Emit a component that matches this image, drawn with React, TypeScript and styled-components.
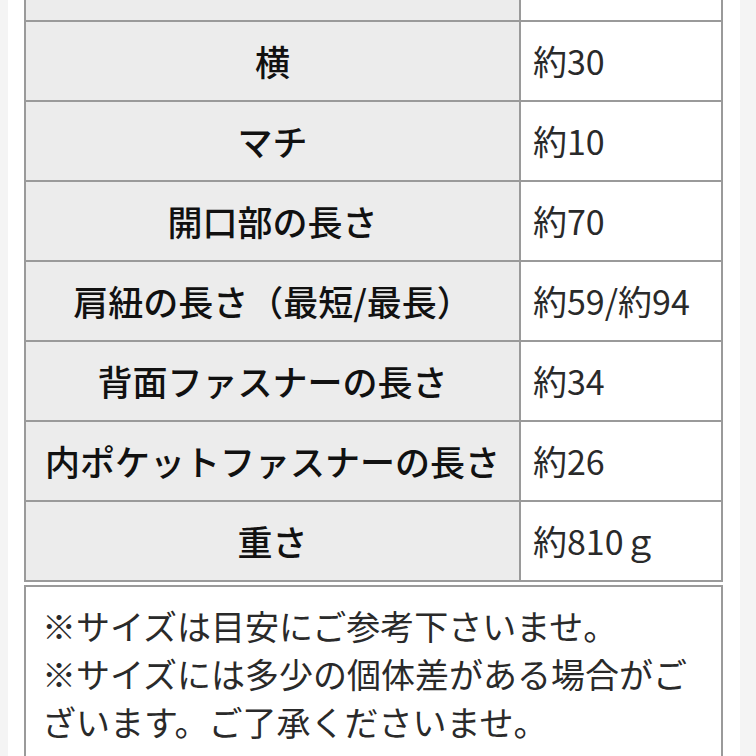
import styled, { createGlobalStyle } from 'styled-components'

const GlobalStyle = createGlobalStyle`
  html, body {
    margin: 0;
    padding: 0;
    background: #f4f4f4;
  }
  body {
    font-family: 'Noto Sans CJK JP', 'Noto Sans', sans-serif;
    color: #222;
  }
`

const Page = styled.div`
  margin-left: 8px;
  width: 732px;
  min-height: 756px;
  background: #ffffff;
  padding: 0 17px 0 16px;
  box-sizing: border-box;
  overflow: hidden;
`

const SizeTable = styled.table`
  width: 699px;
  border-collapse: collapse;
  table-layout: fixed;
`

const Label = styled.th`
  width: 493px;
  background: #ececec;
  border: 2px solid #9a9a9a;
  font-size: 35px;
  font-weight: 500;
  color: #111;
  text-align: center;
  padding: 0;
  height: 78px;
  line-height: 1.2;
  white-space: nowrap;
`

const Value = styled.td`
  border: 2px solid #9a9a9a;
  font-size: 34px;
  font-weight: 400;
  color: #2a2a2a;
  text-align: left;
  padding: 0 0 0 12px;
  height: 78px;
  line-height: 1.2;
  white-space: nowrap;
`

const CutRow = styled.tr`
  th, td {
    height: 20px;
    border-top: none;
  }
`

const NoteTable = styled.table`
  width: 699px;
  margin-top: 3px;
  border-collapse: collapse;
`

const Note = styled.td`
  border: 2px solid #9a9a9a;
  padding: 15px 16px 20px 16px;
  font-size: 34px;
  line-height: 48px;
  color: #2a2a2a;
`

interface SizeRow {
  label: string
  value: string
}

const rows: SizeRow[] = [
  { label: '横', value: '約30' },
  { label: 'マチ', value: '約10' },
  { label: '開口部の長さ', value: '約70' },
  { label: '肩紐の長さ（最短/最長）', value: '約59/約94' },
  { label: '背面ファスナーの長さ', value: '約34' },
  { label: '内ポケットファスナーの長さ', value: '約26' },
  { label: '重さ', value: '約810ｇ' },
]

function App() {
  return (
    <>
      <GlobalStyle />
      <Page>
        <SizeTable>
          <tbody>
            <CutRow>
              <Label />
              <Value />
            </CutRow>
            {rows.map((row) => (
              <tr key={row.label}>
                <Label>{row.label}</Label>
                <Value>{row.value}</Value>
              </tr>
            ))}
          </tbody>
        </SizeTable>
        <NoteTable>
          <tbody>
            <tr>
              <Note>
                ※サイズは目安にご参考下さいませ。
                <br />
                ※サイズには多少の個体差がある場合がございます。ご了承くださいませ。
              </Note>
            </tr>
          </tbody>
        </NoteTable>
      </Page>
    </>
  )
}

export default App
